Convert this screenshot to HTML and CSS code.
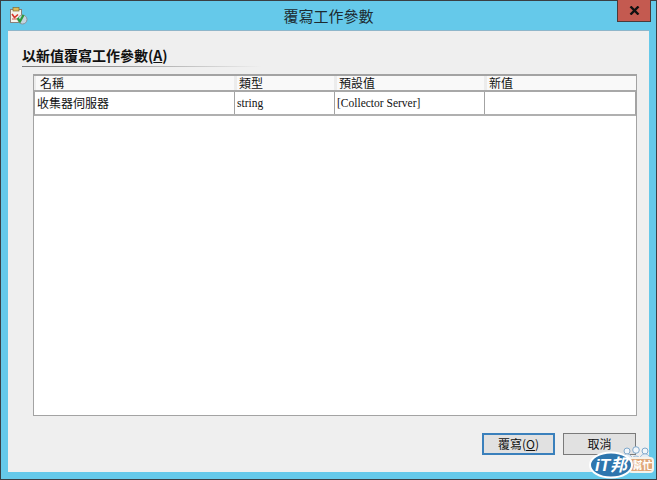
FILE: index.html
```html
<!DOCTYPE html>
<html lang="zh-Hant">
<head>
<meta charset="utf-8">
<title>覆寫工作參數</title>
<link rel="stylesheet" href="styles.css">
</head>
<body>
<div class="window">
  <header class="titlebar">
    <svg class="app-icon" width="18" height="18" viewBox="0 0 18 18">
      <rect x=".5" y="2.5" width="11" height="13" fill="#f6f3ec" stroke="#8a7f78"/>
      <rect x="3" y=".5" width="6" height="3.5" fill="#e0bb55" stroke="#7d6a35" stroke-width=".7"/>
      <path d="M2 7l2.500 3.500 3.500-3" fill="none" stroke="#d8352a" stroke-width="1.600"/>
      <path d="M2 12h5" stroke="#c9544a" stroke-width="1"/>
      <circle cx="12.500" cy="12.500" r="4.500" fill="#c3d4e0" stroke="#8a939a"/>
      <path d="M7.500 11l2.500 3.500 3.500-6.500" fill="none" stroke="#2c9a3c" stroke-width="2.200"/>
    </svg>
    <h1 class="title">覆寫工作參數</h1>
    <button class="close" aria-label="關閉">
      <svg width="11" height="9" viewBox="0 0 11 9"><path d="M1.500 .5l8 8M9.500 .5l-8 8" stroke="#111" stroke-width="2.400"/></svg>
    </button>
  </header>
  <main class="client">
    <h2 class="section">以新值覆寫工作參數(<u>A</u>)</h2>
    <div class="rule"></div>
    <div class="grid">
      <div class="row head">
        <div class="cell c1">名稱</div>
        <div class="cell c2">類型</div>
        <div class="cell c3">預設值</div>
        <div class="cell c4">新值</div>
      </div>
      <div class="row body-row">
        <div class="cell c1 cjk">收集器伺服器</div>
        <div class="cell c2">string</div>
        <div class="cell c3">[Collector Server]</div>
        <div class="cell c4"></div>
      </div>
    </div>
    <div class="actions">
      <button class="btn primary">覆寫(<u>O</u>)</button>
      <button class="btn">取消</button>
    </div>
  </main>
  <svg class="badge" width="66" height="33" viewBox="0 0 66 33">
    <circle cx="38" cy="5" r="3" fill="#f2f6fa" stroke="#7fa8cc"/>
    <circle cx="47" cy="4" r="3.300" fill="#f2f6fa" stroke="#7fa8cc"/>
    <circle cx="56" cy="5" r="3" fill="#f2f6fa" stroke="#7fa8cc"/>
    <path d="M33 14a5 5 0 0 1 10-2a5 5 0 0 1 8 0a5 5 0 0 1 10 2z" fill="#e6edf4" stroke="#9dbcd8"/>
    <rect x="40" y="12" width="24" height="14" rx="3" fill="#dfa678" stroke="#f6f2ea" stroke-width="2"/>
    <text x="53.500" y="23" class="badge-zh" text-anchor="middle">幫忙</text>
    <ellipse cx="22" cy="19" rx="21" ry="12.500" fill="#2e76ae" stroke="#fff" stroke-width="2"/>
    <text x="22" y="25" class="badge-it" text-anchor="middle">iT邦</text>
  </svg>
</div>
</body>
</html>
```
FILE: styles.css
```css
* { box-sizing: border-box; }
html, body { margin: 0; padding: 0; }
body { width: 657px; height: 480px; overflow: hidden; }
.window {
  position: relative;
  width: 657px; height: 480px;
  background: #65c9ea;
  border: 1px solid #3a3f44;
  display: flex; flex-direction: column;
  padding: 0 7px 7px 7px;
  font-family: "Liberation Serif", "Noto Sans CJK TC", serif;
  color: #111;
}
.titlebar { height: 29px; flex: none; display: flex; align-items: flex-start; justify-content: center; position: relative; }
.app-icon { position: absolute; left: 2px; top: 6px; }
.title { margin: 5px 0 0; font: 400 15px/20px "Noto Sans CJK TC", sans-serif; color: #1c2a30; }
.close {
  position: absolute; right: -2px; top: -1px;
  width: 34px; height: 22px; padding: 0;
  background: #c45a50; border: 1px solid #4a3a3a; border-top: 0;
  display: flex; align-items: center; justify-content: center;
}
.client {
  flex: 1; background: #efefef;
  border-top: 1px solid #8fb6ca;
  padding: 0 12px 0 14px;
  display: flex; flex-direction: column;
}
.section { margin: 14px 0 0; font: 700 14px/20px "Noto Sans CJK TC", sans-serif; color: #111; }
.rule { height: 1px; width: 240px; margin-top: 1px; background: linear-gradient(90deg, #777 0, #999 40%, #efefef 100%); }
.grid { margin: 7px 0 0 11px; height: 342px; background: #fff; border: 1px solid #a3a3a3; border-top-width: 2px; }
.row { display: flex; }
.head { height: 16px; background: #f9f9f9; border-bottom: 2px solid #a8a8a8; font: 400 12px/14px "Noto Sans CJK TC", sans-serif; }
.body-row { height: 24px; border-bottom: 2px solid #b0b0b0; font: 400 11.5px/22px "Liberation Serif", "Noto Sans CJK TC", serif; border-left: 1px solid #a3a3a3; border-right: 1px solid #a3a3a3; }
.cell { padding-left: 2px; white-space: nowrap; }
.c1 { width: 199px; }
.c2 { width: 100px; }
.c3 { width: 150px; }
.c4 { flex: 1; }
.body-row .cell + .cell { border-left: 1px solid #a3a3a3; }
.head .cell { padding-left: 2px; border-left: 3px solid #ececec; }
.head .c1 { width: 200px; padding-left: 4px; border-left-width: 2px; }
.cjk { font: 400 12px/22px "Noto Sans CJK TC", sans-serif; }
.actions { display: flex; justify-content: flex-end; gap: 8px; margin-top: 17px; margin-right: 1px; }
.btn {
  width: 73px; height: 22px; padding: 0;
  background: #e1e1e1; border: 1px solid #7a7a7a; color: #111;
  font: 400 12px/18px "Noto Sans CJK TC", sans-serif;
}
.primary { border: 2px solid #3a80bc; }
.badge { position: absolute; left: 588px; top: 445px; }
.badge-zh { font: 700 10px "Noto Sans CJK TC", sans-serif; fill: #fff; }
.badge-it { font: italic 700 17px "Liberation Sans", "Noto Sans CJK TC", sans-serif; fill: #fff; }
```
